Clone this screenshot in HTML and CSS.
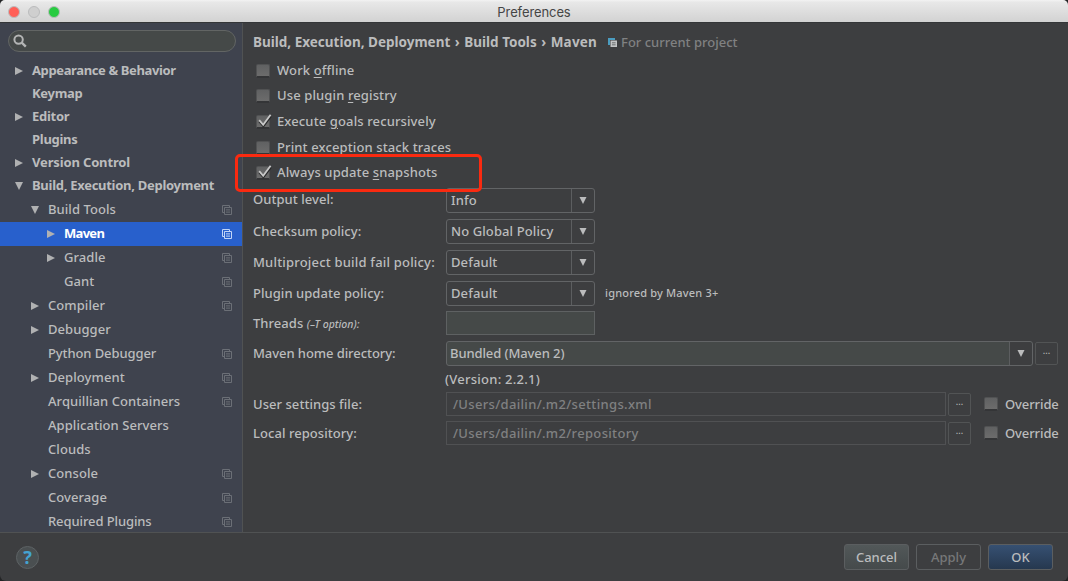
FILE: index.html
```html
<!DOCTYPE html>
<html lang="en">
<head>
<meta charset="utf-8">
<title>Preferences</title>
<link rel="stylesheet" href="styles.css">
</head>
<body>
<svg class="defs" width="0" height="0">
  <symbol id="copy" viewBox="0 0 10 10"><path d="M2.5 7.5H.5V.5H7.5V2.5M2.5 2.5H9.5V9.5H2.5ZM4 4.9H8M4 7.1H8" fill="none" stroke="currentColor"/></symbol>
  <symbol id="right" viewBox="0 0 8 8"><path d="M0 0L8 4L0 8Z" fill="currentColor"/></symbol>
  <symbol id="down" viewBox="0 0 8 8"><path d="M0 0H8L4 8Z" fill="currentColor"/></symbol>
  <symbol id="check" viewBox="0 0 16 16"><path d="M2.4 8.6L6.4 13L13.8 3.4" fill="none" stroke="#292a2b" stroke-width="2.2"/><path d="M2.2 7.2L6.2 11.8L13.6 1.8" fill="none" stroke="#c8c8c8" stroke-width="1.8"/></symbol>
</svg>
<div class="window">
  <header class="titlebar">
    <div class="lights"><i class="red"></i><i class="gray"></i><i class="green"></i></div>
    <span class="title">Preferences</span>
  </header>
  <div class="body">
    <aside class="sidebar">
      <div class="search"><svg width="14" height="14" viewBox="0 0 14 14"><circle cx="5.6" cy="5.6" r="4.2" fill="none" stroke="#b4b5b5" stroke-width="2"/><path d="M8.7 8.7L12.8 12.6" stroke="#b4b5b5" stroke-width="2.4"/></svg></div>
      <nav class="tree">
        <div class="row top"><svg class="arrow"><use href="#right"/></svg><span class="tight">Appearance &amp; Behavior</span></div>
        <div class="row top"><i class="arrow"></i><span>Keymap</span></div>
        <div class="row top"><svg class="arrow"><use href="#right"/></svg><span>Editor</span></div>
        <div class="row top"><i class="arrow"></i><span>Plugins</span></div>
        <div class="row top"><svg class="arrow"><use href="#right"/></svg><span class="loose">Version Control</span></div>
        <div class="row top"><svg class="arrow"><use href="#down"/></svg><span>Build, Execution, Deployment</span></div>
        <div class="row l2"><svg class="arrow"><use href="#down"/></svg><span>Build Tools</span><svg class="copy"><use href="#copy"/></svg></div>
        <div class="row l3 selected"><svg class="arrow"><use href="#right"/></svg><span>Maven</span><svg class="copy"><use href="#copy"/></svg></div>
        <div class="row l3"><svg class="arrow"><use href="#right"/></svg><span>Gradle</span><svg class="copy"><use href="#copy"/></svg></div>
        <div class="row l3"><i class="arrow"></i><span>Gant</span><svg class="copy"><use href="#copy"/></svg></div>
        <div class="row l2"><svg class="arrow"><use href="#right"/></svg><span>Compiler</span><svg class="copy"><use href="#copy"/></svg></div>
        <div class="row l2"><svg class="arrow"><use href="#right"/></svg><span>Debugger</span></div>
        <div class="row l2"><i class="arrow"></i><span class="snug">Python Debugger</span><svg class="copy"><use href="#copy"/></svg></div>
        <div class="row l2"><svg class="arrow"><use href="#right"/></svg><span>Deployment</span><svg class="copy"><use href="#copy"/></svg></div>
        <div class="row l2"><i class="arrow"></i><span>Arquillian Containers</span><svg class="copy"><use href="#copy"/></svg></div>
        <div class="row l2"><i class="arrow"></i><span>Application Servers</span></div>
        <div class="row l2"><i class="arrow"></i><span>Clouds</span></div>
        <div class="row l2"><svg class="arrow"><use href="#right"/></svg><span>Console</span><svg class="copy"><use href="#copy"/></svg></div>
        <div class="row l2"><i class="arrow"></i><span>Coverage</span><svg class="copy"><use href="#copy"/></svg></div>
        <div class="row l2"><i class="arrow"></i><span class="snug">Required Plugins</span><svg class="copy"><use href="#copy"/></svg></div>
      </nav>
    </aside>
    <main class="content">
      <div class="crumbs"><b>Build, Execution, Deployment</b><b class="sep">›</b><b>Build Tools</b><b class="sep">›</b><b class="page">Maven</b><svg width="9" height="9" viewBox="0 0 9 9"><path d="M0 0H7V2H2V7H0Z" fill="#4a9cc0"/><rect x="2.5" y="2.5" width="6.5" height="6.5" fill="#c2c4c5"/><path d="M4 4.8H7.6M4 6.8H7.6" stroke="#55585a" stroke-width=".8"/></svg><span>For current project</span></div>
      <div class="checks">
        <label><i class="box"></i><span>Work <u>o</u>ffline</span></label>
        <label><i class="box"></i><span>Use plugin <u>r</u>egistry</span></label>
        <label><i class="box"><svg class="tick"><use href="#check"/></svg></i><span>Execute <u>g</u>oals recursively</span></label>
        <label><i class="box"></i><span>Print <u>e</u>xception stack traces</span></label>
        <label><i class="box"><svg class="tick"><use href="#check"/></svg></i><span>Always update <u>s</u>napshots</span></label>
      </div>
      <div class="form">
        <div class="field first"><span class="name">Output level:</span><div class="combo"><span>Info</span><i><svg><use href="#down"/></svg></i></div></div>
        <div class="field"><span class="name">Checksum policy:</span><div class="combo"><span>No Global Policy</span><i><svg><use href="#down"/></svg></i></div></div>
        <div class="field"><span class="name wide">Multiproject build fail policy:</span><div class="combo"><span>Default</span><i><svg><use href="#down"/></svg></i></div></div>
        <div class="field"><span class="name">Plugin update policy:</span><div class="combo"><span>Default</span><i><svg><use href="#down"/></svg></i></div><small>ignored by Maven 3+</small></div>
        <div class="field threads"><span class="name">Threads <em>(–T option):</em></span><div class="input short"></div></div>
        <div class="field home"><span class="name">Maven home directory:</span><div class="combo long"><span>Bundled (Maven 2)</span><i><svg><use href="#down"/></svg></i></div><div class="more">...</div></div>
        <div class="version">(Version: 2.2.1)</div>
        <div class="field path"><span class="name">User settings file:</span><div class="input off">/Users/dailin/.m2/settings.xml</div><div class="more">...</div><label><i class="box"></i><span>Override</span></label></div>
        <div class="field path"><span class="name">Local repository:</span><div class="input off">/Users/dailin/.m2/repository</div><div class="more">...</div><label><i class="box"></i><span>Override</span></label></div>
      </div>
    </main>
  </div>
  <footer class="footer">
    <div class="help">?</div>
    <div class="buttons"><div class="btn cancel">Cancel</div><div class="btn apply">Apply</div><div class="btn ok">OK</div></div>
  </footer>
  <div class="highlight"></div>
</div>
</body>
</html>
```
FILE: styles.css
```css
* { box-sizing: border-box; }
body { margin: 0; background: #232425; font: 500 13px/18px "Noto Sans", "Open Sans", sans-serif; color: #bbbcbd; }
i { font-style: normal; }
.defs { position: absolute; }
.window { position: relative; display: flex; flex-direction: column; width: 1068px; height: 581px; border-radius: 5px 5px 6px 6px; overflow: hidden; background: #3d3e40; white-space: nowrap; }
.titlebar { flex: none; display: grid; grid-template-columns: 1fr auto 1fr; align-items: center; height: 22px; background: linear-gradient(#f3f3f3, #e8e8e8 10%, #d2d2d2); }
.title { font: 13px/22px Inter, "Liberation Sans", sans-serif; color: #454545; padding-top: 1px; letter-spacing: -.1px; }
.lights { display: flex; gap: 8px; padding-left: 8px; }
.lights i { width: 12px; height: 12px; border-radius: 50%; border: 1px solid; }
.red { background: #ff5f57; border-color: #e9514a; }
.gray { background: #cfcfcf; border-color: #bcbcbc; }
.green { background: #28cb41; border-color: #22b839; }
.body { display: flex; height: 510px; flex: none; border-top: 1px solid #343638; }
.sidebar { width: 243px; flex: none; background: #3f434e; border-right: 1px solid #505253; overflow: hidden; }
.search { display: flex; align-items: center; width: 228px; height: 22px; margin: 7px 0 0 8px; padding-left: 4px; border: 1px solid #626564; border-radius: 11px; background: #454948; }
.tree { padding-top: 8px; }
.row { display: flex; align-items: center; height: 24px; padding-right: 10px; letter-spacing: .07px; }
.row.top { height: 23px; padding-left: 15px; font-weight: 700; letter-spacing: -.28px; }
.row.l2 { padding-left: 31px; }
.row.l3 { padding-left: 47px; }
.arrow { width: 8px; height: 8px; margin-right: 9px; color: #b0b1b2; flex: none; }
.row.top .arrow { margin-bottom: 2px; }
.row span { flex: 1; padding-bottom: 2px; }
.row.top span { padding-bottom: 3px; }
.row .tight { letter-spacing: -.38px; }
.row .loose { letter-spacing: -.15px; }
.row .snug { letter-spacing: -.1px; }
.copy { width: 10px; height: 10px; color: #6b6f76; }
.row.selected { background: #2860cc; color: #fff; font-weight: 700; letter-spacing: -.7px; }
.selected .copy { color: #c2d5f7; }
.content { flex: 1; padding: 9px 0 0 10px; }
.crumbs { display: flex; align-items: center; height: 20px; }
.crumbs b { font-size: 13.5px; font-weight: 700; }
.crumbs .sep { width: 14px; text-align: center; }
.crumbs .page { letter-spacing: .2px; }
.crumbs svg { margin: 0 4px 0 11px; }
.crumbs span { color: #808182; }
.checks { display: flex; flex-direction: column; padding-top: 6px; letter-spacing: .12px; }
label { display: flex; align-items: center; }
label span { padding-bottom: 2px; }
.checks label { height: 25.6px; }
.box { position: relative; width: 14px; height: 14px; margin: 0 7px 0 3px; border-radius: 2px; background: linear-gradient(#606162, #6c6c6c); border: 1px solid #515253; border-bottom: 2px solid #343537; flex: none; }
.tick { position: absolute; left: 0; top: -3px; width: 16px; height: 16px; }
u { text-decoration: underline; text-underline-offset: 2px; text-decoration-thickness: 1px; }
.form { margin-top: -1px; }
.field { display: flex; align-items: center; height: 31px; }
.name { width: 193px; flex: none; letter-spacing: .05px; }
.first .name { padding-bottom: 2px; }
.wide { letter-spacing: .19px; }
.name em { font-size: 10.5px; letter-spacing: 0; }
.home .name { letter-spacing: -.07px; }
.combo { display: flex; width: 149px; height: 25px; border: 1px solid #626466; border-radius: 3px; flex: none; }
.combo span { flex: 1; padding-left: 4px; line-height: 22px; letter-spacing: .1px; }
.combo i { display: flex; align-items: center; justify-content: center; width: 23px; border-left: 1px solid #5c5e60; }
.combo svg { width: 8px; height: 7px; }
small { font-size: 11px; margin-left: 10px; letter-spacing: .18px; }
.threads { height: 29px; }
.input { height: 24px; border: 1px solid #5e6162; background: #454948; }
.short { width: 149px; }
.combo.long { width: 587px; background: #454948; }
.combo.long span { padding-left: 3px; letter-spacing: -.1px; }
.combo.long i { background: #3d3e40; border-radius: 0 3px 3px 0; }
.more { width: 23px; height: 23px; margin-left: 2px; border: 1px solid #525455; border-radius: 2px; text-align: center; font-size: 9px; line-height: 16px; }
.version { height: 21px; padding: 1px 0 0 192px; letter-spacing: .25px; }
.path { height: 29px; }
.input.off { width: 500px; background: none; border-color: #505153; color: #808182; line-height: 22px; padding-left: 6px; letter-spacing: .33px; }
.path .more { margin-left: 2px; }
.path label { margin-left: 10px; }
.path label span { padding-bottom: 0; letter-spacing: -.1px; }
.footer { flex: none; display: flex; justify-content: space-between; align-items: center; height: 49px; border-top: 1px solid #505253; padding: 0 15px 0 16px; }
.help { width: 23px; height: 23px; border: 1px solid #5d6264; border-radius: 50%; background: #4a4f51; color: #44a3d1; font: 700 18px/21px "Noto Sans", sans-serif; text-align: center; }
.buttons { display: flex; gap: 7px; }
.btn { width: 65px; height: 26px; border: 1px solid #5b5e60; border-radius: 3px; text-align: center; line-height: 24px; }
.cancel { background: linear-gradient(#525859, #454a4b); }
.apply { color: #777879; }
.ok { background: linear-gradient(#365072, #26384f); }
.highlight { position: absolute; left: 235px; top: 154px; width: 247px; height: 38px; border: 3px solid #fa2a10; border-radius: 5px; }
```
